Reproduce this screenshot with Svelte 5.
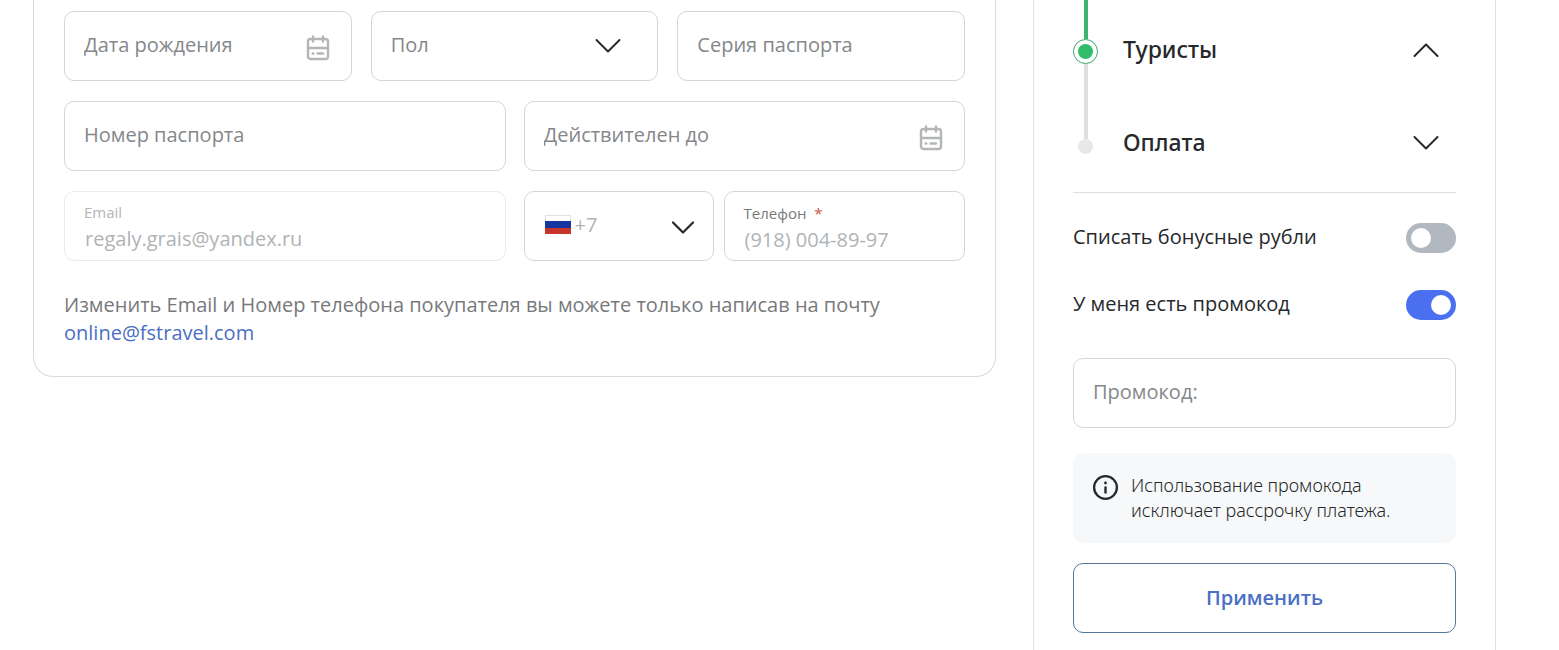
<script lang="ts">
  let birthDate = $state("");
  let gender = $state("");
  let passportSeries = $state("");
  let passportNumber = $state("");
  let validUntil = $state("");
  let email = $state("regaly.grais@yandex.ru");
  let phone = $state("(918) 004-89-97");
  let useBonus = $state(false);
  let hasPromo = $state(true);
  let promo = $state("");
  let openStep = $state("tourists");

  const steps = [
    { id: "tourists", title: "Туристы", current: true },
    { id: "payment", title: "Оплата", current: false },
  ];

  function toggleStep(id: string) {
    openStep = openStep === id ? "" : id;
  }
</script>

{#snippet calendar()}
  <svg class="calendar" width="24" height="26" viewBox="0 0 24 26" aria-hidden="true">
    <rect x="2" y="4" width="20" height="20" rx="2.5" />
    <path d="M7 1.5v5M17 1.5v5M2 13h20M11.5 18.5h5.5M6.7 18.5h.6" />
  </svg>
{/snippet}

{#snippet chevron(up: boolean)}
  <svg class="chevron" width="26" height="16" viewBox="0 0 26 16" aria-hidden="true">
    <path d={up ? "M1.5 14L13 2.5L24.5 14" : "M1.5 2L13 13.5L24.5 2"} />
  </svg>
{/snippet}

<div class="page">
  <form class="card">
    <div class="row thirds">
      <div class="field">
        <input aria-label="Дата рождения" placeholder="Дата рождения" bind:value={birthDate} />
        {@render calendar()}
      </div>
      <div class="field wide-end">
        <select class:empty={!gender} aria-label="Пол" bind:value={gender}>
          <option value="">Пол</option>
          <option value="m">Мужской</option>
          <option value="f">Женский</option>
        </select>
        {@render chevron(false)}
      </div>
      <div class="field">
        <input aria-label="Серия паспорта" placeholder="Серия паспорта" bind:value={passportSeries} />
      </div>
    </div>

    <div class="row halves">
      <div class="field">
        <input aria-label="Номер паспорта" placeholder="Номер паспорта" bind:value={passportNumber} />
      </div>
      <div class="field">
        <input aria-label="Действителен до" placeholder="Действителен до" bind:value={validUntil} />
        {@render calendar()}
      </div>
    </div>

    <div class="row halves">
      <div class="field stacked disabled">
        <label for="email">Email</label>
        <input id="email" type="email" disabled bind:value={email} />
      </div>
      <div class="phone">
        <div class="field code">
          <svg class="flag" width="26" height="20" viewBox="0 0 26 20" aria-hidden="true">
            <rect x="0.5" y="0.5" width="25" height="18" fill="#fff" stroke="#dfe1e3" />
            <path d="M0 6h26v7H0z" fill="#1535a0" />
            <path d="M0 13h26v6H0z" fill="#c5352b" />
          </svg>
          <select aria-label="Код страны">
            <option>+7</option>
          </select>
          <svg class="chevron bold" width="22" height="14" viewBox="0 0 22 14" aria-hidden="true">
            <path d="M1 1.5L11 11.5L21 1.5" />
          </svg>
        </div>
        <div class="field stacked number">
          <label for="phone">Телефон <span class="required">*</span></label>
          <input id="phone" type="tel" disabled bind:value={phone} />
        </div>
      </div>
    </div>

    <p class="note">
      Изменить Email и Номер телефона покупателя вы можете только написав на почту
      <a href="mailto:online@fstravel.com">online@fstravel.com</a>
    </p>
  </form>

  <aside class="summary">
    <ol class="steps">
      {#each steps as step}
        <li class="step" class:current={step.current}>
          <div class="rail">
            <span class="line before"></span>
            <span class="dot"></span>
            {#if step.current}<span class="line after"></span>{/if}
          </div>
          <button
            type="button"
            class="step-btn"
            aria-expanded={openStep === step.id}
            onclick={() => toggleStep(step.id)}
          >
            {step.title}
            {@render chevron(openStep === step.id)}
          </button>
        </li>
      {/each}
    </ol>

    <div class="options">
      <label class="option">
        Списать бонусные рубли
        <input type="checkbox" role="switch" class="switch" bind:checked={useBonus} />
      </label>
      <label class="option">
        У меня есть промокод
        <input type="checkbox" role="switch" class="switch" bind:checked={hasPromo} />
      </label>
    </div>

    {#if hasPromo}
      <div class="field">
        <input aria-label="Промокод" placeholder="Промокод:" bind:value={promo} />
      </div>

      <div class="info">
        <svg width="26" height="26" viewBox="0 0 26 26" aria-hidden="true">
          <circle cx="12.5" cy="12.5" r="11.4" fill="none" stroke="#26282b" stroke-width="2.3" />
          <path d="M12.5 12.5v5" fill="none" stroke="#26282b" stroke-width="2.4" stroke-linecap="round" />
          <circle cx="12.5" cy="8" r="1.4" fill="#26282b" />
        </svg>
        <p>Использование промокода исключает рассрочку платежа.</p>
      </div>

      <button type="button" class="apply">Применить</button>
    {/if}
  </aside>
</div>

<style>
  :global(body) {
    margin: 0;
    background: #fff;
  }

  .page,
  .page * {
    box-sizing: border-box;
  }

  .page {
    display: grid;
    grid-template-columns: minmax(0, 1fr) 463px;
    gap: 37px;
    align-items: start;
    min-height: 100vh;
    padding: 0 63px 0 33px;
    font-family: "Open Sans", "Noto Sans", sans-serif;
    font-size: 20px;
    line-height: 28px;
    color: #26282b;
  }

  input,
  select,
  button {
    font: inherit;
    color: inherit;
  }

  .card {
    display: flex;
    flex-direction: column;
    gap: 20px;
    padding: 11px 30px 29px;
    border: 1px solid #d9dbdd;
    border-top: none;
    border-radius: 0 0 20px 20px;
  }

  .row {
    display: grid;
    gap: 19px;
  }

  .thirds {
    grid-template-columns: repeat(3, minmax(0, 1fr));
  }

  .halves {
    grid-template-columns: repeat(2, minmax(0, 1fr));
    column-gap: 18px;
  }

  .field {
    display: flex;
    align-items: center;
    height: 70px;
    padding: 0 21px 0 19px;
    border: 1px solid #d3d5d7;
    border-radius: 10px;
    background: #fff;
  }

  .field.wide-end {
    padding-right: 36px;
  }

  .field input,
  .field select {
    flex: 1;
    min-width: 0;
    height: 28px;
    padding: 0;
    border: none;
    outline: none;
    background: transparent;
    appearance: none;
  }

  .field > input,
  .field > select {
    margin-bottom: 2px;
  }

  .field input::placeholder,
  .field select.empty {
    color: #85878a;
    opacity: 1;
  }

  .calendar {
    flex: none;
    margin-top: 4px;
    fill: none;
    stroke: #b3b6b8;
    stroke-width: 2.4;
    stroke-linecap: round;
  }

  .chevron {
    flex: none;
    fill: none;
    stroke: #26282b;
    stroke-width: 2;
    stroke-linecap: round;
    stroke-linejoin: round;
  }

  .chevron.bold {
    margin-top: 4px;
    stroke-width: 2.2;
  }

  .field.stacked {
    flex-direction: column;
    align-items: stretch;
    gap: 3px;
    padding-top: 10px;
  }

  .stacked label {
    font-size: 15px;
    line-height: 20px;
    color: #77797c;
  }

  .field.stacked input {
    flex: none;
    margin: 0;
    padding-left: 1px;
    color: #b0b3b6;
  }

  .disabled {
    border-color: #e9eaeb;
  }

  .disabled label {
    color: #b3b5b8;
  }

  .required {
    margin-left: 4px;
    color: #c5553f;
  }

  .phone {
    display: flex;
    gap: 10px;
  }

  .code {
    flex: none;
    width: 190px;
    gap: 4px;
    padding: 0 19px 0 20px;
  }

  .code select {
    color: #b0b3b6;
  }

  .flag {
    flex: none;
    margin-bottom: 2px;
  }

  .field.number {
    flex: 1;
    min-width: 0;
    padding-top: 11px;
  }

  .note {
    margin: 10px 0 0;
    color: #77797c;
  }

  .note a {
    color: #4b6fc4;
    text-decoration: none;
  }

  .summary {
    min-height: 100vh;
    padding: 0 39px 16px;
    border: 1px solid #dfe1e3;
    border-width: 0 1px;
  }

  .steps {
    margin: 0;
    padding: 0;
    list-style: none;
    border-bottom: 1px solid #dcdee0;
  }

  .step {
    display: flex;
    gap: 25px;
    height: 95px;
  }

  .rail {
    display: flex;
    flex-direction: column;
    align-items: center;
    width: 25px;
  }

  .line {
    width: 4px;
    background: #dcdfe0;
  }

  .before {
    height: 42px;
  }

  .after {
    flex: 1;
  }

  .dot {
    width: 15px;
    height: 15px;
    border-radius: 50%;
    background: #e8e8e8;
  }

  .current {
    height: 97px;
  }

  .current .before {
    height: 39px;
    background: #3db46d;
  }

  .current .dot {
    display: grid;
    place-items: center;
    width: 25px;
    height: 25px;
    border: 1px solid #3aa76a;
    background: #fff;
  }

  .current .dot::before {
    content: "";
    width: 15px;
    height: 15px;
    border-radius: 50%;
    background: #2fbd69;
  }

  .step-btn {
    display: flex;
    flex: 1;
    align-items: center;
    justify-content: space-between;
    height: 32px;
    margin-top: 29px;
    padding: 0 17px 0 0;
    border: none;
    background: none;
    font-family: "Noto Sans", "Open Sans", sans-serif;
    font-size: 23px;
    font-weight: 500;
    line-height: 32px;
    text-align: left;
    cursor: pointer;
  }

  .step-btn .chevron {
    margin-top: 2px;
  }

  .current .step-btn {
    margin-top: 33px;
  }

  .options {
    display: flex;
    flex-direction: column;
    gap: 37px;
    padding: 30px 0 38px;
  }

  .option {
    display: flex;
    align-items: flex-start;
    justify-content: space-between;
    height: 30px;
    cursor: pointer;
  }

  .switch {
    display: flex;
    width: 50px;
    height: 30px;
    margin: 0;
    padding: 5px;
    border-radius: 15px;
    background: #b1b8bf;
    appearance: none;
    cursor: pointer;
  }

  .switch::before {
    content: "";
    width: 20px;
    height: 20px;
    border-radius: 50%;
    background: #fff;
  }

  .switch:checked {
    justify-content: flex-end;
    background: #4a70f0;
  }

  .info {
    display: flex;
    align-items: flex-start;
    gap: 12px;
    margin: 25px 0 20px;
    padding: 20px;
    border-radius: 10px;
    background: #f6f8f9;
  }

  .info svg {
    flex: none;
    margin-top: 2px;
    overflow: visible;
  }

  .info p {
    margin: 0;
    font-family: "Noto Sans", "Open Sans", sans-serif;
    font-size: 18px;
    font-weight: 300;
    line-height: 25px;
  }

  .apply {
    width: 100%;
    height: 70px;
    border: 1px solid #55779a;
    border-radius: 10px;
    background: #fff;
    font-weight: 600;
    color: #4b6fc4;
    cursor: pointer;
  }
</style>
